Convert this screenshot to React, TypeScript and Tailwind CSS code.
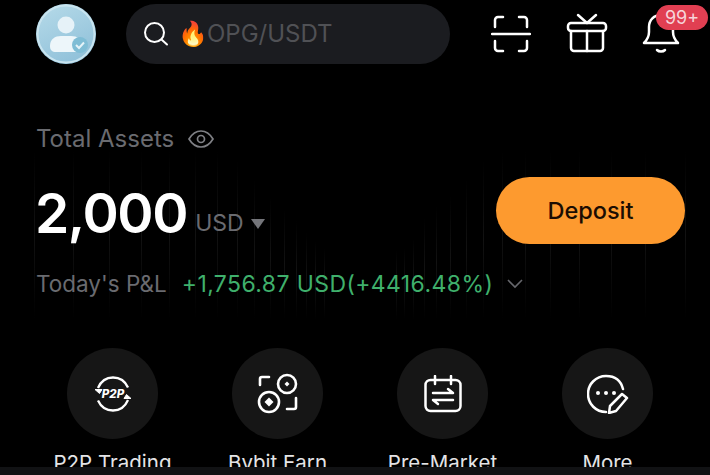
const bars = [
  [34, 150], [73, 150], [109, 150], [141, 150], [169, 150], [195, 150], [217, 150], [237, 160], [254, 178],
  [270, 196], [284, 208], [296, 220], [306, 232], [315, 240], [324, 248],
  [396, 250], [404, 248], [413, 238], [424, 218], [436, 205], [450, 195], [466, 178], [483, 160], [502, 150],
  [525, 150], [550, 150], [579, 150], [611, 150], [645, 150], [685, 150],
]

function ChartLines() {
  return (
    <svg className="absolute left-0 top-0" width="710" height="330" viewBox="0 0 710 330">
      <defs>
        <linearGradient id="fade" x1="0" y1="0" x2="0" y2="1">
          <stop offset="0" stopColor="#ffffff" stopOpacity="0" />
          <stop offset="0.5" stopColor="#ffffff" stopOpacity="0.07" />
          <stop offset="1" stopColor="#ffffff" stopOpacity="0" />
        </linearGradient>
      </defs>
      {bars.map(([x, top]) => (
        <rect key={x} x={x} y={top} width="1" height={320 - top} fill="url(#fade)" />
      ))}
    </svg>
  )
}

function Avatar() {
  return (
    <svg width="60" height="60" viewBox="0 0 60 60">
      <defs>
        <linearGradient id="ava" x1="0.2" y1="0" x2="0.7" y2="1">
          <stop offset="0" stopColor="#b4d9e8" />
          <stop offset="1" stopColor="#8fc0d9" />
        </linearGradient>
      </defs>
      <circle cx="30" cy="30" r="30" fill="url(#ava)" />
      <circle cx="30" cy="30" r="28.500" fill="none" stroke="#c9e4ef" strokeWidth="2" />
      <circle cx="30" cy="21" r="8.500" fill="#e6f2f8" />
      <path d="M14 42c0-7 5-10 11-10h10c6 0 11 3 11 9v2c0 3-2 5-5 5H20c-4 0-6-2-6-6z" fill="#edf6fa" />
      <circle cx="44" cy="41" r="8" fill="#7fbdd5" />
      <path d="M40 41l3 3 5-5.500" fill="none" stroke="#e4f3f8" strokeWidth="2" />
    </svg>
  )
}

function ScanIcon() {
  return (
    <svg width="40" height="38" viewBox="0 0 40 38" fill="none" stroke="white" strokeWidth="2.500" strokeLinecap="round" strokeLinejoin="round">
      <path d="M12 2H7a3 3 0 0 0-3 3v7" />
      <path d="M28 2h5a3 3 0 0 1 3 3v7" />
      <path d="M1 19h38" />
      <path d="M4 26v7a3 3 0 0 0 3 3h5" />
      <path d="M36 26v7a3 3 0 0 1-3 3h-5" />
    </svg>
  )
}

function GiftIcon() {
  return (
    <svg width="42" height="42" viewBox="0 0 42 42" fill="none" stroke="white" strokeWidth="2.500" strokeLinecap="round" strokeLinejoin="round">
      <path d="M12 2l9 8 9-8" />
      <path d="M5 10h32a3 3 0 0 1 3 3v2a3 3 0 0 1-3 3H5a3 3 0 0 1-3-3v-2a3 3 0 0 1 3-3z" />
      <path d="M5 18v17a3 3 0 0 0 3 3h26a3 3 0 0 0 3-3V18" />
      <path d="M21 18v20" />
    </svg>
  )
}

function BellIcon() {
  return (
    <svg width="40" height="42" viewBox="0 0 40 42" fill="none" stroke="white" strokeWidth="2.500" strokeLinecap="round" strokeLinejoin="round">
      <path d="M3 31c3-3 5-6 5-11v-5C8 8 13 3 20 3s12 5 12 12v5c0 5 2 8 5 11z" />
      <path d="M16 38c2 2 6 2 8 0" />
    </svg>
  )
}

function P2PIcon() {
  return (
    <svg width="38" height="38" viewBox="0 0 38 38" fill="none" stroke="white" strokeWidth="2.300" strokeLinejoin="round">
      <path d="M4 13C7 6 12 2.500 19 2.500c7 0 12 3.500 15 10" />
      <path d="M1 14.500h7l-2.500 4z" fill="white" strokeWidth="1" />
      <path d="M34 25c-3 7-8 10.500-15 10.500-7 0-12-3.500-15-10" />
      <path d="M37 23.500h-7l2.500-4z" fill="white" strokeWidth="1" />
      <text x="19" y="23" textAnchor="middle" fill="white" stroke="none" fontSize="11.500" fontWeight="800" fontStyle="italic" fontFamily="Inter, sans-serif">P2P</text>
    </svg>
  )
}

function EarnIcon() {
  return (
    <svg width="42" height="42" viewBox="0 0 42 42" fill="none" stroke="white" strokeWidth="2.600" strokeLinecap="round" strokeLinejoin="round">
      <path d="M3 12V6a2 2 0 0 1 2-2h7" />
      <circle cx="30" cy="11" r="9" />
      <path d="M30 8.500l2.500 2.500-2.500 2.500-2.500-2.500z" fill="white" stroke="none" />
      <circle cx="12" cy="29" r="10" />
      <path d="M12 24.500l4.500 4.500-4.500 4.500-4.500-4.500z" fill="white" stroke="none" />
      <path d="M39 25v9a2 2 0 0 1-2 2h-7" />
    </svg>
  )
}

function MarketIcon() {
  return (
    <svg width="38" height="38" viewBox="0 0 38 38" fill="none" stroke="white" strokeWidth="2.500" strokeLinecap="round" strokeLinejoin="round">
      <rect x="1.500" y="5" width="35" height="31" rx="5" />
      <path d="M11 1v8M27 1v8" />
      <path d="M9 18h20l-5-4" />
      <path d="M29 25H9l5 4" />
    </svg>
  )
}

function MoreIcon() {
  return (
    <svg width="42" height="40" viewBox="0 0 42 40" fill="none" stroke="white" strokeWidth="2.500" strokeLinecap="round" strokeLinejoin="round">
      <path d="M36 15C34 7 28 2 19 2 9 2 1 10 1 20s8 18 18 18" />
      <circle cx="11" cy="19" r="2" fill="white" stroke="none" />
      <circle cx="19" cy="19" r="2" fill="white" stroke="none" />
      <circle cx="27" cy="19" r="2" fill="white" stroke="none" />
      <path d="M35 20l5 4-11 13-7 2 1-7z" />
    </svg>
  )
}

const actions = [
  { label: 'P2P Trading', icon: <P2PIcon /> },
  { label: 'Bybit Earn', icon: <EarnIcon /> },
  { label: 'Pre-Market', icon: <MarketIcon /> },
  { label: 'More', icon: <MoreIcon /> },
]

export default function App() {
  return (
    <div className="relative h-[475px] w-[710px] overflow-hidden bg-black font-['Inter',sans-serif]">
      <ChartLines />

      {/* header */}
      <div className="relative flex h-[68px] items-center pl-9 pr-[26px]">
        <Avatar />
        <div className="ml-[30px] flex h-[60px] w-[324px] items-center rounded-full bg-[#1b1c20] pl-[17px]">
          <svg width="26" height="26" viewBox="0 0 26 26" fill="none" stroke="white" strokeWidth="2" strokeLinecap="round">
            <circle cx="11.500" cy="11.500" r="9.500" />
            <path d="M18.500 18.500l5.500 5" />
          </svg>
          <span className="ml-[9px] text-[24px] leading-none">🔥</span>
          <span className="-ml-[1px] text-[24px] text-[#505155]">OPG/USDT</span>
        </div>
        <div className="ml-[41px]"><ScanIcon /></div>
        <div className="ml-[35px]"><GiftIcon /></div>
        <div className="relative -mt-[2px] ml-[33px]">
          <BellIcon />
          <span className="absolute -top-[7px] left-[15px] flex h-[25px] w-[52px] items-center justify-center rounded-[13px] bg-[#e13f52] text-[18px] text-[#f6d5da]">
            99+
          </span>
        </div>
      </div>

      {/* assets */}
      <div className="relative mt-[56px] pl-9 pr-[25px]">
        <div className="flex items-center">
          <span className="text-[24px] leading-[30px] text-[#6a6b70]">Total Assets</span>
          <svg className="ml-[14px]" width="26" height="20" viewBox="0 0 26 20" fill="none" stroke="#7f8085" strokeWidth="1.700">
            <path d="M1 10c3-5 7-8 12-8s9 3 12 8c-3 5-7 8-12 8S4 15 1 10z" />
            <circle cx="13" cy="10" r="3.500" />
          </svg>
        </div>
        <div className="mt-[23px] flex items-start justify-between">
          <div className="flex items-baseline">
            <span className="-ml-[1px] text-[55px] font-semibold leading-[72px] tracking-[-1.400px] text-white">2,000</span>
            <span className="ml-[8px] -translate-y-0.5 text-[23px] text-[#6a6b70]">USD</span>
            <svg className="ml-[6px] -translate-y-[3px]" width="16" height="12" viewBox="0 0 16 12">
              <path d="M1 1h14l-7 10z" fill="#74757a" />
            </svg>
          </div>
          <button className="h-[67px] w-[189px] rounded-full bg-[#fd9a2f] text-[23.500px] font-medium text-[#1c0d02]">
            Deposit
          </button>
        </div>
        <div className="mt-[18px] flex items-center">
          <span className="text-[22.500px] leading-[34px] text-[#6a6b70]">Today's P&L</span>
          <span className="ml-[15px] text-[23px] leading-[34px] tracking-[0.4px] text-[#3fb06c]">+1,756.87 USD(+4416.48%)</span>
          <svg className="ml-[14px]" width="16" height="10" viewBox="0 0 16 10" fill="none" stroke="#66676c" strokeWidth="1.600">
            <path d="M1 1l7 7 7-7" />
          </svg>
        </div>
      </div>

      {/* actions */}
      <div className="absolute bottom-0 left-0 right-0 h-[127px] overflow-hidden">
        <div className="ml-[30px] grid w-[660px] grid-cols-4">
          {actions.map((a) => (
            <div key={a.label} className="flex flex-col items-center">
              <div className="flex h-[91px] w-[91px] items-center justify-center rounded-full bg-[#161616]">{a.icon}</div>
              <span className="mt-[11px] whitespace-nowrap text-[20.500px] leading-[26px] text-[#e4e4e6]">{a.label}</span>
            </div>
          ))}
        </div>
        <div className="absolute bottom-0 left-0 right-0 h-2 bg-[#111214]" />
      </div>
    </div>
  )
}
